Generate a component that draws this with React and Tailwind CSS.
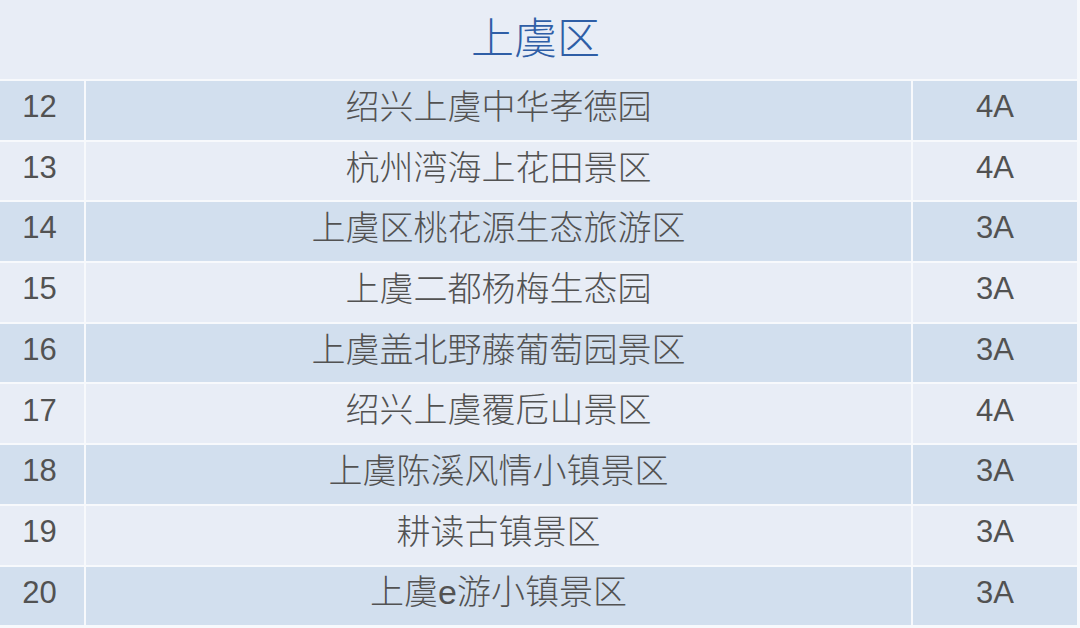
import React from 'react';

// --- DATA ---
const ROWS = [
  { no: 12, name: '绍兴上虞中华孝德园', level: '4A' },
  { no: 13, name: '杭州湾海上花田景区', level: '4A' },
  { no: 14, name: '上虞区桃花源生态旅游区', level: '3A' },
  { no: 15, name: '上虞二都杨梅生态园', level: '3A' },
  { no: 16, name: '上虞盖北野藤葡萄园景区', level: '3A' },
  { no: 17, name: '绍兴上虞覆卮山景区', level: '4A' },
  { no: 18, name: '上虞陈溪风情小镇景区', level: '3A' },
  { no: 19, name: '耕读古镇景区', level: '3A' },
  { no: 20, name: '上虞e游小镇景区', level: '3A' },
];

const CJK = { fontFamily: '"Liberation Sans", "Noto Sans CJK SC", sans-serif' };

const Row = ({ row, index }) => {
  const bg = index % 2 === 0 ? 'bg-[#d2dfee]' : 'bg-[#e8edf6]';
  return (
    <div className="grid grid-cols-[84px_825px_164px] gap-[2px] h-[58.7px] text-[#525252] font-light">
      <div className={`${bg} flex items-center justify-center pb-[6px] pr-[5px] text-[31px]`}>{row.no}</div>
      <div className={`${bg} flex items-center justify-center pb-[6px] text-[34px]`}>{row.name}</div>
      <div className={`${bg} flex items-center justify-center pb-[6px] text-[31px]`}>{row.level}</div>
    </div>
  );
};

export default function App() {
  return (
    <div className="w-[1080px] h-[628px] bg-[#f7f9fc] overflow-hidden" style={CJK}>
      <div className="w-[1077px] flex flex-col gap-[2px]">
        <div className="h-[79px] bg-[#e8edf6] flex items-center justify-center pr-[6px] text-[43px] text-[#2f5ea6] font-light">
          上虞区
        </div>
        {ROWS.map((r, i) => (
          <Row key={r.no} row={r} index={i} />
        ))}
      </div>
    </div>
  );
}
